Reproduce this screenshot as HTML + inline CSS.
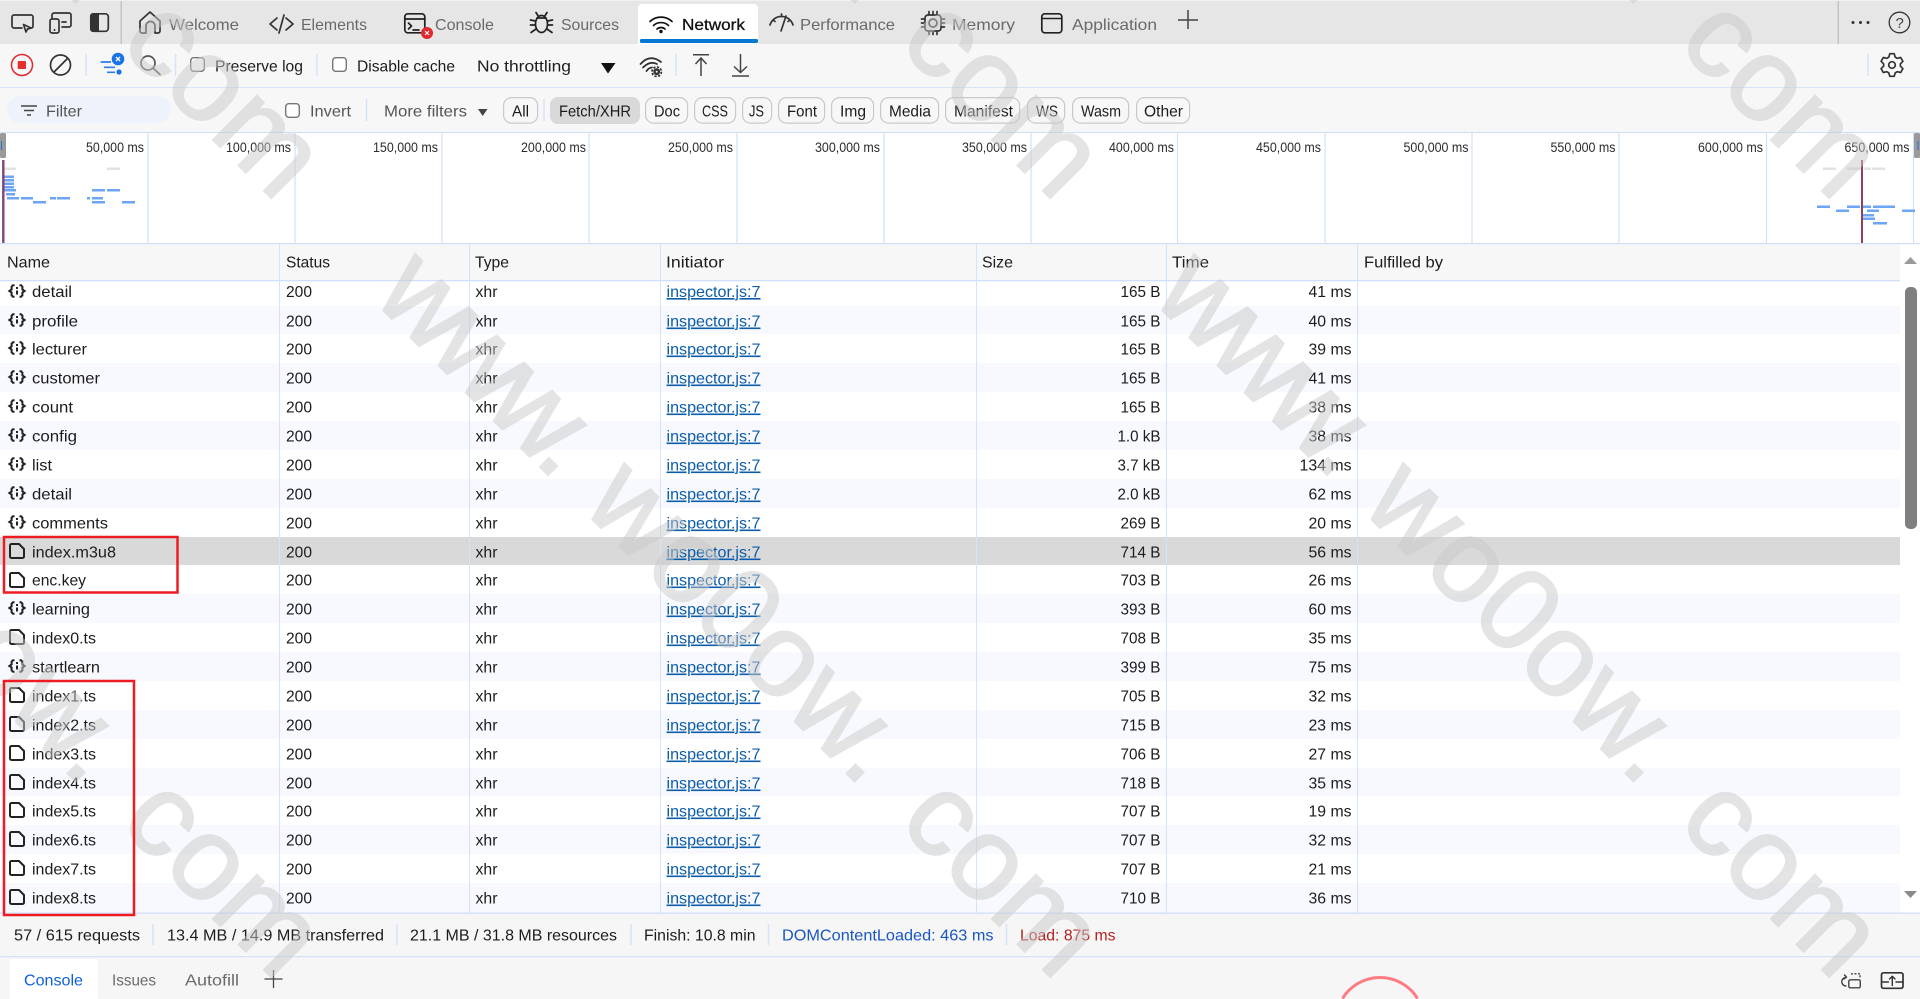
<!DOCTYPE html>
<html lang="en">
<head>
<meta charset="utf-8">
<title>DevTools Network</title>
<style>
html,body{margin:0;padding:0;background:#fff;width:1920px;height:999px;overflow:hidden}
svg{display:block}
text{font-family:"Liberation Sans",Arial,sans-serif;font-size:16px;fill:#1c1c1c;white-space:pre}
.g{fill:#6a6a6a}
.l{fill:#0b5cab;text-decoration:underline}
.o{font-size:13.6px;fill:#2c2c2c}
.wm{font-size:118px;fill:#c8c8c8;stroke:#c8c8c8;stroke-width:2px;letter-spacing:1px}
.i{fill:none;stroke:#333;stroke-width:1.7;stroke-linecap:round;stroke-linejoin:round}
.k{fill:#fff;stroke:#767676;stroke-width:1.4}
.s{stroke:#d6e4fa;stroke-width:1.5}
.b{fill:#6ea6f7}
.y{fill:#e2e2e2}
.ch{fill:#f7f7f7;stroke:#c9c9c9;stroke-width:1.2}
</style>
</head>
<body>
<svg width="1920" height="999" viewBox="0 0 1920 999" xmlns="http://www.w3.org/2000/svg">
<defs>
<symbol id="fe" viewBox="0 0 18 14" overflow="visible"><path d="M6.5 1.200H5L3.600 2.700V5.500L1.400 7L3.600 8.500V11.300L5 12.800H6.500M11.500 1.200H13L14.400 2.700V5.500L16.600 7L14.400 8.500V11.300L13 12.800H11.500" fill="none" stroke="#222" stroke-width="2"/><rect x="8" y="3" width="2" height="2" fill="#222"/><rect x="8" y="6.500" width="2" height="4" fill="#222"/></symbol>
<symbol id="fi" viewBox="0 0 16 16" overflow="visible"><path d="M1 2.500A1.500 1.500 0 0 1 2.500 1H10L15 6V13.500A1.500 1.500 0 0 1 13.500 15H2.500A1.500 1.500 0 0 1 1 13.500Z" fill="none" stroke="#222" stroke-width="2" stroke-linejoin="round"/></symbol>
</defs>

<!-- tab bar -->
<rect width="1920" height="44" fill="#e6e6e6"/>
<rect width="1920" height="1" fill="#f0f0f0"/>
<path class="i" d="M22 28H14a2 2 0 0 1-2-2V17a2 2 0 0 1 2-2H31a2 2 0 0 1 2 2V26a2 2 0 0 1-1.500 2"/>
<path class="i" d="M23.500 24.500L31 28L27.500 29L26 32Z"/>
<rect class="i" x="50" y="19" width="9" height="14" rx="2"/>
<circle cx="54.500" cy="30" r="1" fill="#333"/>
<path class="i" d="M52 18V15a2 2 0 0 1 2-2H69a2 2 0 0 1 2 2V25a2 2 0 0 1-2 2H62M62 22H66"/>
<path d="M93 13H99V32H93a3 3 0 0 1-3-3V16a3 3 0 0 1 3-3Z" fill="#333"/>
<rect class="i" x="90.800" y="13.800" width="17.500" height="17.500" rx="3"/>
<rect x="120.500" y="1" width="1.500" height="43" fill="#c4c4c4"/>
<path class="i" d="M140 21L150 12L160 21V31a2 2 0 0 1-2 2H155V26a4.500 4.500 0 0 0-9 0V33H142a2 2 0 0 1-2-2Z"/>
<text class="g" x="169" y="30" textLength="70" lengthAdjust="spacingAndGlyphs">Welcome</text>
<path class="i" d="M277 18L270 24L277 30M286 18L293 24L286 30M284 15L279 33"/>
<text class="g" x="301" y="30" textLength="66" lengthAdjust="spacingAndGlyphs">Elements</text>
<rect class="i" x="404.800" y="13.800" width="20" height="19" rx="3" style="stroke:#222"/>
<path class="i" d="M405 19H425M408.500 23L411.500 26L408.500 29M413 30H419" style="stroke:#222"/>
<circle cx="427" cy="33" r="6" fill="#e0282e"/>
<path d="M425 31L429 35M429 31L425 35" stroke="#fff" stroke-width="1.100"/>
<text class="g" x="435" y="30" textLength="59" lengthAdjust="spacingAndGlyphs">Console</text>
<ellipse class="i" cx="541.500" cy="24" rx="6" ry="8.500" style="stroke:#222"/>
<path class="i" d="M536 12.500L538.500 16.500M547 12.500L544.500 16.500M537 18H546M530.500 20L535.500 21M552.500 20L547.500 21M530.500 25H535M552.500 25H548M531 32.500L536 29M552 32.500L547 29" style="stroke:#222"/>
<text class="g" x="561" y="30" textLength="58" lengthAdjust="spacingAndGlyphs">Sources</text>
<path d="M638 44V8a4 4 0 0 1 4-4H754a4 4 0 0 1 4 4V44Z" fill="#fff"/>
<rect x="640" y="39" width="118" height="4" rx="1.500" fill="#0078d4"/>
<g fill="none" stroke="#111" stroke-width="1.700" stroke-linecap="round"><path d="M650 21.500a16 16 0 0 1 22 0M653.500 25.500a11 11 0 0 1 15 0M657 29a6 6 0 0 1 8 0"/></g>
<circle cx="661" cy="31.500" r="1.700" fill="#111"/>
<text x="682" y="30" textLength="63" lengthAdjust="spacingAndGlyphs" style="fill:#111;stroke:#111;stroke-width:.3px">Network</text>
<path class="i" d="M770 25A12 12 0 0 1 793 25M773 20L775 21.500M781.500 14V16.500M790 20L788 21.500M786 16L781 31"/>
<text class="g" x="800" y="30" textLength="95" lengthAdjust="spacingAndGlyphs">Performance</text>
<rect class="i" x="925" y="15" width="16" height="16" rx="3"/>
<circle class="i" cx="933" cy="23" r="4"/>
<path class="i" d="M929 11.500V14M933 11.500V14M937 11.500V14M929 32V34.500M933 32V34.500M937 32V34.500M921.500 19H924M921.500 23H924M921.500 27H924M942 19H944.500M942 23H944.500M942 27H944.500"/>
<text class="g" x="952" y="30" textLength="63" lengthAdjust="spacingAndGlyphs">Memory</text>
<rect x="1041.800" y="13.800" width="20" height="19" rx="3" fill="none" stroke="#222" stroke-width="1.700"/>
<path d="M1042 18.500H1062" stroke="#222" stroke-width="1.500"/>
<text class="g" x="1072" y="30" textLength="85" lengthAdjust="spacingAndGlyphs">Application</text>
<path d="M1188 10V29M1178 20H1198" stroke="#444" stroke-width="1.500"/>
<rect x="1837.500" y="1" width="1.500" height="43" fill="#c4c4c4"/>
<circle cx="1853" cy="22.500" r="1.500" fill="#333"/><circle cx="1860.500" cy="22.500" r="1.500" fill="#333"/><circle cx="1868" cy="22.500" r="1.500" fill="#333"/>
<circle class="i" cx="1899.500" cy="22.500" r="10.300" style="stroke-width:1.300"/>
<text x="1895.500" y="28" style="font-size:15px;fill:#444">?</text>

<!-- toolbar -->
<rect y="44" width="1920" height="44" fill="#f7f7f7"/>
<rect y="87" width="1920" height="1" fill="#d6e4fa"/>
<circle cx="22" cy="65" r="10.500" fill="none" stroke="#e5252b" stroke-width="1.500"/>
<rect x="17.700" y="61" width="8.300" height="8" fill="#e5302f" rx=".8"/>
<circle class="i" cx="60.500" cy="65" r="10"/>
<path class="i" d="M54.500 71.500L67.500 58.500"/>
<path class="s" d="M86 54V76M175.500 54V76M317 54V76M676 54V76M1868 54V76"/>
<path d="M100.600 62H111M104 67.300H115M107 72.300H115" stroke="#2b7de9" stroke-width="1.700"/>
<circle cx="119" cy="72" r="2.600" fill="#1a73e8"/>
<circle cx="118" cy="59" r="6.300" fill="#1a73e8"/>
<path d="M116 57L120 61M120 57L116 61" stroke="#fff" stroke-width="1.300"/>
<circle class="i" cx="148" cy="63" r="7" style="stroke:#555"/>
<path class="i" d="M153.500 68.500L160 74.500" style="stroke:#555"/>
<rect class="k" x="190.700" y="57.700" width="13.600" height="13.600" rx="3"/>
<text x="215" y="71.500" textLength="88" lengthAdjust="spacingAndGlyphs">Preserve log</text>
<rect class="k" x="332.700" y="57.700" width="13.600" height="13.600" rx="3"/>
<text x="357" y="71.500" textLength="98" lengthAdjust="spacingAndGlyphs">Disable cache</text>
<text x="477" y="71.500" textLength="94" lengthAdjust="spacingAndGlyphs">No throttling</text>
<polygon points="601,63 615.500,63 608,73.500" fill="#111"/>
<path d="M640.500 64Q650 53.500 661 62M643 67.500Q650 60.500 657 64M646.500 71Q649 67.500 652 67.500" fill="none" stroke="#333" stroke-width="1.800" stroke-linecap="round"/>
<circle cx="656.700" cy="71.700" r="3.400" fill="#333"/>
<circle cx="656.700" cy="71.700" r="4.700" fill="none" stroke="#333" stroke-width="1.800" stroke-dasharray="2.200 1.500"/>
<circle cx="656.700" cy="71.700" r="1" fill="#f7f7f7"/>
<path d="M693 54.800H709M701 76V58M695.500 64L701 58L706.500 64M740.500 54V72.500M734 66.500L740.500 72.500L747 66.500M732 76H749" fill="none" stroke="#444" stroke-width="1.500"/>
<g transform="translate(1892,65)"><path class="i" d="M-3.200-7.900L-2.200-11.300L2.200-11.300L3.200-7.900L5.200-6.700L8.700-7.500L10.900-3.700L8.400-1.200L8.400 1.200L10.900 3.700L8.700 7.500L5.200 6.700L3.200 7.900L2.200 11.300L-2.200 11.300L-3.200 7.900L-5.200 6.700L-8.700 7.500L-10.900 3.700L-8.400 1.200L-8.400-1.200L-10.900-3.700L-8.700-7.500L-5.200-6.700Z"/><circle class="i" r="3.300"/></g>

<!-- filter row -->
<rect y="88" width="1920" height="44" fill="#f7f7f7"/>
<rect x="7" y="96" width="164" height="27" rx="13.500" fill="#edf2fb"/>
<path d="M21 106H37M24 110.500H34M27 115H31" stroke="#444" stroke-width="1.500"/>
<text x="46" y="116.500" textLength="36" lengthAdjust="spacingAndGlyphs" style="fill:#555">Filter</text>
<rect class="k" x="285.700" y="103.700" width="13.600" height="13.600" rx="3"/>
<text x="310" y="116.500" textLength="41" lengthAdjust="spacingAndGlyphs" style="fill:#555">Invert</text>
<path class="s" d="M366.500 99V121M544 99V121"/>
<text x="384" y="116.500" textLength="83" lengthAdjust="spacingAndGlyphs" style="fill:#555">More filters</text>
<polygon points="478,109 487.500,109 482.700,116" fill="#444"/>
<rect class="ch" x="503.600" y="97.600" width="34" height="25.500" rx="8"/>
<text x="512" y="116.500" textLength="17" lengthAdjust="spacingAndGlyphs">All</text>
<rect x="550" y="97" width="90" height="27" rx="8" fill="#d9d9d9"/>
<text x="559" y="116.500" textLength="72" lengthAdjust="spacingAndGlyphs">Fetch/XHR</text>
<rect class="ch" x="645.600" y="97.600" width="42" height="25.500" rx="8"/><text x="654" y="116.500" textLength="26" lengthAdjust="spacingAndGlyphs">Doc</text>
<rect class="ch" x="694.600" y="97.600" width="41" height="25.500" rx="8"/><text x="702" y="116.500" textLength="26" lengthAdjust="spacingAndGlyphs">CSS</text>
<rect class="ch" x="742.600" y="97.600" width="29" height="25.500" rx="8"/><text x="749" y="116.500" textLength="15" lengthAdjust="spacingAndGlyphs">JS</text>
<rect class="ch" x="778.600" y="97.600" width="46" height="25.500" rx="8"/><text x="787" y="116.500" textLength="30" lengthAdjust="spacingAndGlyphs">Font</text>
<rect class="ch" x="831.600" y="97.600" width="42" height="25.500" rx="8"/><text x="840" y="116.500" textLength="26" lengthAdjust="spacingAndGlyphs">Img</text>
<rect class="ch" x="880.600" y="97.600" width="58" height="25.500" rx="8"/><text x="889" y="116.500" textLength="42" lengthAdjust="spacingAndGlyphs">Media</text>
<rect class="ch" x="945.600" y="97.600" width="74" height="25.500" rx="8"/><text x="954" y="116.500" textLength="59" lengthAdjust="spacingAndGlyphs">Manifest</text>
<rect class="ch" x="1027.600" y="97.600" width="37" height="25.500" rx="8"/><text x="1036" y="116.500" textLength="22" lengthAdjust="spacingAndGlyphs">WS</text>
<rect class="ch" x="1072.600" y="97.600" width="56" height="25.500" rx="8"/><text x="1081" y="116.500" textLength="40" lengthAdjust="spacingAndGlyphs">Wasm</text>
<rect class="ch" x="1136.600" y="97.600" width="53" height="25.500" rx="8"/><text x="1144" y="116.500" textLength="39" lengthAdjust="spacingAndGlyphs">Other</text>
<rect y="132" width="1920" height="1.300" fill="#d0e0fb"/>

<!-- overview -->
<rect y="133" width="1920" height="110" fill="#fff"/>
<path d="M148 133V243M295 133V243M442 133V243M589 133V243M737 133V243M884 133V243M1031 133V243M1177.500 133V243M1325 133V243M1472 133V243M1619 133V243M1766.500 133V243M1913.500 133V243" stroke="#cfe0fb" stroke-width="1.200"/>
<g text-anchor="end">
<text class="o" x="144" y="152" textLength="58" lengthAdjust="spacingAndGlyphs">50,000 ms</text>
<text class="o" x="291" y="152" textLength="65" lengthAdjust="spacingAndGlyphs">100,000 ms</text>
<text class="o" x="438" y="152" textLength="65" lengthAdjust="spacingAndGlyphs">150,000 ms</text>
<text class="o" x="586" y="152" textLength="65" lengthAdjust="spacingAndGlyphs">200,000 ms</text>
<text class="o" x="733" y="152" textLength="65" lengthAdjust="spacingAndGlyphs">250,000 ms</text>
<text class="o" x="880" y="152" textLength="65" lengthAdjust="spacingAndGlyphs">300,000 ms</text>
<text class="o" x="1027" y="152" textLength="65" lengthAdjust="spacingAndGlyphs">350,000 ms</text>
<text class="o" x="1174" y="152" textLength="65" lengthAdjust="spacingAndGlyphs">400,000 ms</text>
<text class="o" x="1321" y="152" textLength="65" lengthAdjust="spacingAndGlyphs">450,000 ms</text>
<text class="o" x="1468.500" y="152" textLength="65" lengthAdjust="spacingAndGlyphs">500,000 ms</text>
<text class="o" x="1615.500" y="152" textLength="65" lengthAdjust="spacingAndGlyphs">550,000 ms</text>
<text class="o" x="1763" y="152" textLength="65" lengthAdjust="spacingAndGlyphs">600,000 ms</text>
<text class="o" x="1909.500" y="152" textLength="65" lengthAdjust="spacingAndGlyphs">650,000 ms</text>
</g>
<rect class="y" x="3" y="167.500" width="13" height="2.500"/><rect class="y" x="107" y="167.500" width="13" height="2.500"/>
<rect class="b" x="3" y="175.500" width="11" height="2.500"/><rect class="b" x="3" y="179" width="11" height="2.500"/><rect class="b" x="3" y="182.500" width="11" height="2.500"/><rect class="b" x="3" y="186" width="11" height="2.500"/>
<rect class="b" x="3" y="189" width="13" height="2.500"/><rect class="b" x="92" y="189" width="13" height="2.500"/><rect class="b" x="107" y="189" width="13" height="2.500"/>
<rect class="b" x="6" y="193" width="9" height="2.500"/>
<rect class="b" x="7" y="197" width="12" height="2.500"/><rect class="b" x="21" y="197" width="12" height="2.500"/><rect class="b" x="50" y="197" width="6" height="2.500"/><rect class="b" x="57" y="197" width="13" height="2.500"/><rect class="b" x="87" y="197" width="3" height="2.500"/><rect class="b" x="92" y="197" width="11" height="2.500"/>
<rect class="b" x="33" y="201" width="13" height="2.500"/><rect class="b" x="92" y="201" width="13" height="2.500"/><rect class="b" x="122" y="201" width="13" height="2.500"/>
<rect x="2" y="160" width="1" height="83" fill="#4a6fd0"/><rect x="3" y="160" width="1.500" height="83" fill="#b0353f"/>
<rect x="0" y="133" width="6" height="25" rx="1.500" fill="#9a9a9a"/><rect x="1" y="141" width="1" height="9" fill="#2b6fd6"/>
<rect class="y" x="1823" y="167.500" width="13" height="2.500"/><rect class="y" x="1847" y="167.500" width="14" height="2.500"/><rect class="y" x="1864" y="167.500" width="7" height="2.500"/><rect class="y" x="1872" y="167.500" width="13" height="2.500"/>
<rect class="b" x="1817" y="205.500" width="13" height="2.500"/><rect class="b" x="1847" y="205.500" width="13" height="2.500"/><rect class="b" x="1862" y="205.500" width="9" height="2.500"/><rect class="b" x="1873" y="205.500" width="9" height="2.500"/><rect class="b" x="1882" y="205.500" width="13" height="2.500"/>
<rect class="b" x="1836" y="209.500" width="13" height="2.500"/><rect class="b" x="1867" y="209.500" width="12" height="2.500"/><rect class="b" x="1902" y="209.500" width="13" height="2.500"/>
<rect class="b" x="1863" y="214" width="11" height="2.500"/><rect class="b" x="1863" y="217.500" width="12" height="2.500"/><rect class="b" x="1873" y="222" width="14" height="2.500"/>
<rect x="1861" y="160" width="2" height="83" fill="#93405a"/>
<rect x="1914" y="133" width="6" height="25" rx="1.500" fill="#9a9a9a"/><rect x="1917.500" y="141" width="1" height="9" fill="#2b6fd6"/>

<!-- table header -->
<rect y="243" width="1900" height="38" fill="#f7f7f7"/>
<rect y="243" width="1920" height="1.200" fill="#d0e0fb"/>
<rect y="280" width="1900" height="1.300" fill="#d0e0fb"/>
<text x="7" y="267.500" textLength="43" lengthAdjust="spacingAndGlyphs">Name</text>
<text x="286" y="267.500" textLength="44" lengthAdjust="spacingAndGlyphs">Status</text>
<text x="475" y="267.500" textLength="34" lengthAdjust="spacingAndGlyphs">Type</text>
<text x="666" y="267.500" textLength="58" lengthAdjust="spacingAndGlyphs">Initiator</text>
<text x="982" y="267.500" textLength="31" lengthAdjust="spacingAndGlyphs">Size</text>
<text x="1172" y="267.500" textLength="37" lengthAdjust="spacingAndGlyphs">Time</text>
<text x="1364" y="267.500" textLength="79" lengthAdjust="spacingAndGlyphs">Fulfilled by</text>

<!-- stripes -->
<g fill="#f8f9fe">
<rect y="306" width="1900" height="28"/><rect y="363" width="1900" height="29"/><rect y="421" width="1900" height="29"/><rect y="479" width="1900" height="29"/>
<rect y="594" width="1900" height="29"/><rect y="652" width="1900" height="29"/><rect y="710" width="1900" height="29"/><rect y="768" width="1900" height="28"/><rect y="825" width="1900" height="29"/><rect y="883" width="1900" height="30"/>
</g>
<rect y="537" width="1900" height="28" fill="#d9d9d9"/>
<path d="M279.500 243V913M469.500 243V913M660.500 243V913M976.500 243V913M1166.500 243V913M1357.500 243V913" stroke="#d6e4fa" stroke-width="1.100"/>

<!-- icons -->
<use href="#fe" x="8" y="284" width="18" height="14"/>
<use href="#fe" x="8" y="313" width="18" height="14"/>
<use href="#fe" x="8" y="341" width="18" height="14"/>
<use href="#fe" x="8" y="370" width="18" height="14"/>
<use href="#fe" x="8" y="399" width="18" height="14"/>
<use href="#fe" x="8" y="428" width="18" height="14"/>
<use href="#fe" x="8" y="457" width="18" height="14"/>
<use href="#fe" x="8" y="486" width="18" height="14"/>
<use href="#fe" x="8" y="515" width="18" height="14"/>
<use href="#fi" x="9" y="543" width="16" height="16"/>
<use href="#fi" x="9" y="572" width="16" height="16"/>
<use href="#fe" x="8" y="601" width="18" height="14"/>
<use href="#fi" x="9" y="629" width="16" height="16"/>
<use href="#fe" x="8" y="659" width="18" height="14"/>
<use href="#fi" x="9" y="687" width="16" height="16"/>
<use href="#fi" x="9" y="716" width="16" height="16"/>
<use href="#fi" x="9" y="745" width="16" height="16"/>
<use href="#fi" x="9" y="774" width="16" height="16"/>
<use href="#fi" x="9" y="802" width="16" height="16"/>
<use href="#fi" x="9" y="831" width="16" height="16"/>
<use href="#fi" x="9" y="860" width="16" height="16"/>
<use href="#fi" x="9" y="889" width="16" height="16"/>

<!-- names -->
<text x="32" y="297" textLength="40" lengthAdjust="spacingAndGlyphs">detail</text>
<text x="32" y="326.500" textLength="46" lengthAdjust="spacingAndGlyphs">profile</text>
<text x="32" y="354.500" textLength="55" lengthAdjust="spacingAndGlyphs">lecturer</text>
<text x="32" y="383.500" textLength="68" lengthAdjust="spacingAndGlyphs">customer</text>
<text x="32" y="412.500" textLength="41" lengthAdjust="spacingAndGlyphs">count</text>
<text x="32" y="441.500" textLength="45" lengthAdjust="spacingAndGlyphs">config</text>
<text x="32" y="470.500" textLength="20" lengthAdjust="spacingAndGlyphs">list</text>
<text x="32" y="499.500" textLength="40" lengthAdjust="spacingAndGlyphs">detail</text>
<text x="32" y="528.500" textLength="76" lengthAdjust="spacingAndGlyphs">comments</text>
<text x="32" y="557.500" textLength="84" lengthAdjust="spacingAndGlyphs">index.m3u8</text>
<text x="32" y="585.500" textLength="54" lengthAdjust="spacingAndGlyphs">enc.key</text>
<text x="32" y="614.500" textLength="58" lengthAdjust="spacingAndGlyphs">learning</text>
<text x="32" y="643.500" textLength="64" lengthAdjust="spacingAndGlyphs">index0.ts</text>
<text x="32" y="672.500" textLength="68" lengthAdjust="spacingAndGlyphs">startlearn</text>
<text x="32" y="701.500" textLength="64" lengthAdjust="spacingAndGlyphs">index1.ts</text>
<text x="32" y="730.500" textLength="64" lengthAdjust="spacingAndGlyphs">index2.ts</text>
<text x="32" y="759.500" textLength="64" lengthAdjust="spacingAndGlyphs">index3.ts</text>
<text x="32" y="788.500" textLength="64" lengthAdjust="spacingAndGlyphs">index4.ts</text>
<text x="32" y="816.500" textLength="64" lengthAdjust="spacingAndGlyphs">index5.ts</text>
<text x="32" y="845.500" textLength="64" lengthAdjust="spacingAndGlyphs">index6.ts</text>
<text x="32" y="874.500" textLength="64" lengthAdjust="spacingAndGlyphs">index7.ts</text>
<text x="32" y="903.500" textLength="64" lengthAdjust="spacingAndGlyphs">index8.ts</text>

<!-- status -->
<text x="286" y="297" textLength="26" lengthAdjust="spacingAndGlyphs">200</text>
<text x="286" y="326.500" textLength="26" lengthAdjust="spacingAndGlyphs">200</text>
<text x="286" y="354.500" textLength="26" lengthAdjust="spacingAndGlyphs">200</text>
<text x="286" y="383.500" textLength="26" lengthAdjust="spacingAndGlyphs">200</text>
<text x="286" y="412.500" textLength="26" lengthAdjust="spacingAndGlyphs">200</text>
<text x="286" y="441.500" textLength="26" lengthAdjust="spacingAndGlyphs">200</text>
<text x="286" y="470.500" textLength="26" lengthAdjust="spacingAndGlyphs">200</text>
<text x="286" y="499.500" textLength="26" lengthAdjust="spacingAndGlyphs">200</text>
<text x="286" y="528.500" textLength="26" lengthAdjust="spacingAndGlyphs">200</text>
<text x="286" y="557.500" textLength="26" lengthAdjust="spacingAndGlyphs">200</text>
<text x="286" y="585.500" textLength="26" lengthAdjust="spacingAndGlyphs">200</text>
<text x="286" y="614.500" textLength="26" lengthAdjust="spacingAndGlyphs">200</text>
<text x="286" y="643.500" textLength="26" lengthAdjust="spacingAndGlyphs">200</text>
<text x="286" y="672.500" textLength="26" lengthAdjust="spacingAndGlyphs">200</text>
<text x="286" y="701.500" textLength="26" lengthAdjust="spacingAndGlyphs">200</text>
<text x="286" y="730.500" textLength="26" lengthAdjust="spacingAndGlyphs">200</text>
<text x="286" y="759.500" textLength="26" lengthAdjust="spacingAndGlyphs">200</text>
<text x="286" y="788.500" textLength="26" lengthAdjust="spacingAndGlyphs">200</text>
<text x="286" y="816.500" textLength="26" lengthAdjust="spacingAndGlyphs">200</text>
<text x="286" y="845.500" textLength="26" lengthAdjust="spacingAndGlyphs">200</text>
<text x="286" y="874.500" textLength="26" lengthAdjust="spacingAndGlyphs">200</text>
<text x="286" y="903.500" textLength="26" lengthAdjust="spacingAndGlyphs">200</text>

<!-- type -->
<text x="475.500" y="297" textLength="22" lengthAdjust="spacingAndGlyphs">xhr</text>
<text x="475.500" y="326.500" textLength="22" lengthAdjust="spacingAndGlyphs">xhr</text>
<text x="475.500" y="354.500" textLength="22" lengthAdjust="spacingAndGlyphs">xhr</text>
<text x="475.500" y="383.500" textLength="22" lengthAdjust="spacingAndGlyphs">xhr</text>
<text x="475.500" y="412.500" textLength="22" lengthAdjust="spacingAndGlyphs">xhr</text>
<text x="475.500" y="441.500" textLength="22" lengthAdjust="spacingAndGlyphs">xhr</text>
<text x="475.500" y="470.500" textLength="22" lengthAdjust="spacingAndGlyphs">xhr</text>
<text x="475.500" y="499.500" textLength="22" lengthAdjust="spacingAndGlyphs">xhr</text>
<text x="475.500" y="528.500" textLength="22" lengthAdjust="spacingAndGlyphs">xhr</text>
<text x="475.500" y="557.500" textLength="22" lengthAdjust="spacingAndGlyphs">xhr</text>
<text x="475.500" y="585.500" textLength="22" lengthAdjust="spacingAndGlyphs">xhr</text>
<text x="475.500" y="614.500" textLength="22" lengthAdjust="spacingAndGlyphs">xhr</text>
<text x="475.500" y="643.500" textLength="22" lengthAdjust="spacingAndGlyphs">xhr</text>
<text x="475.500" y="672.500" textLength="22" lengthAdjust="spacingAndGlyphs">xhr</text>
<text x="475.500" y="701.500" textLength="22" lengthAdjust="spacingAndGlyphs">xhr</text>
<text x="475.500" y="730.500" textLength="22" lengthAdjust="spacingAndGlyphs">xhr</text>
<text x="475.500" y="759.500" textLength="22" lengthAdjust="spacingAndGlyphs">xhr</text>
<text x="475.500" y="788.500" textLength="22" lengthAdjust="spacingAndGlyphs">xhr</text>
<text x="475.500" y="816.500" textLength="22" lengthAdjust="spacingAndGlyphs">xhr</text>
<text x="475.500" y="845.500" textLength="22" lengthAdjust="spacingAndGlyphs">xhr</text>
<text x="475.500" y="874.500" textLength="22" lengthAdjust="spacingAndGlyphs">xhr</text>
<text x="475.500" y="903.500" textLength="22" lengthAdjust="spacingAndGlyphs">xhr</text>

<!-- initiator -->
<text class="l" x="666.500" y="297" textLength="94" lengthAdjust="spacingAndGlyphs">inspector.js:7</text>
<text class="l" x="666.500" y="326.500" textLength="94" lengthAdjust="spacingAndGlyphs">inspector.js:7</text>
<text class="l" x="666.500" y="354.500" textLength="94" lengthAdjust="spacingAndGlyphs">inspector.js:7</text>
<text class="l" x="666.500" y="383.500" textLength="94" lengthAdjust="spacingAndGlyphs">inspector.js:7</text>
<text class="l" x="666.500" y="412.500" textLength="94" lengthAdjust="spacingAndGlyphs">inspector.js:7</text>
<text class="l" x="666.500" y="441.500" textLength="94" lengthAdjust="spacingAndGlyphs">inspector.js:7</text>
<text class="l" x="666.500" y="470.500" textLength="94" lengthAdjust="spacingAndGlyphs">inspector.js:7</text>
<text class="l" x="666.500" y="499.500" textLength="94" lengthAdjust="spacingAndGlyphs">inspector.js:7</text>
<text class="l" x="666.500" y="528.500" textLength="94" lengthAdjust="spacingAndGlyphs">inspector.js:7</text>
<text class="l" x="666.500" y="557.500" textLength="94" lengthAdjust="spacingAndGlyphs">inspector.js:7</text>
<text class="l" x="666.500" y="585.500" textLength="94" lengthAdjust="spacingAndGlyphs">inspector.js:7</text>
<text class="l" x="666.500" y="614.500" textLength="94" lengthAdjust="spacingAndGlyphs">inspector.js:7</text>
<text class="l" x="666.500" y="643.500" textLength="94" lengthAdjust="spacingAndGlyphs">inspector.js:7</text>
<text class="l" x="666.500" y="672.500" textLength="94" lengthAdjust="spacingAndGlyphs">inspector.js:7</text>
<text class="l" x="666.500" y="701.500" textLength="94" lengthAdjust="spacingAndGlyphs">inspector.js:7</text>
<text class="l" x="666.500" y="730.500" textLength="94" lengthAdjust="spacingAndGlyphs">inspector.js:7</text>
<text class="l" x="666.500" y="759.500" textLength="94" lengthAdjust="spacingAndGlyphs">inspector.js:7</text>
<text class="l" x="666.500" y="788.500" textLength="94" lengthAdjust="spacingAndGlyphs">inspector.js:7</text>
<text class="l" x="666.500" y="816.500" textLength="94" lengthAdjust="spacingAndGlyphs">inspector.js:7</text>
<text class="l" x="666.500" y="845.500" textLength="94" lengthAdjust="spacingAndGlyphs">inspector.js:7</text>
<text class="l" x="666.500" y="874.500" textLength="94" lengthAdjust="spacingAndGlyphs">inspector.js:7</text>
<text class="l" x="666.500" y="903.500" textLength="94" lengthAdjust="spacingAndGlyphs">inspector.js:7</text>

<!-- size -->
<g text-anchor="end">
<text x="1160.500" y="297" textLength="40" lengthAdjust="spacingAndGlyphs">165 B</text>
<text x="1160.500" y="326.500" textLength="40" lengthAdjust="spacingAndGlyphs">165 B</text>
<text x="1160.500" y="354.500" textLength="40" lengthAdjust="spacingAndGlyphs">165 B</text>
<text x="1160.500" y="383.500" textLength="40" lengthAdjust="spacingAndGlyphs">165 B</text>
<text x="1160.500" y="412.500" textLength="40" lengthAdjust="spacingAndGlyphs">165 B</text>
<text x="1160.500" y="441.500" textLength="43" lengthAdjust="spacingAndGlyphs">1.0 kB</text>
<text x="1160.500" y="470.500" textLength="43" lengthAdjust="spacingAndGlyphs">3.7 kB</text>
<text x="1160.500" y="499.500" textLength="43" lengthAdjust="spacingAndGlyphs">2.0 kB</text>
<text x="1160.500" y="528.500" textLength="40" lengthAdjust="spacingAndGlyphs">269 B</text>
<text x="1160.500" y="557.500" textLength="40" lengthAdjust="spacingAndGlyphs">714 B</text>
<text x="1160.500" y="585.500" textLength="40" lengthAdjust="spacingAndGlyphs">703 B</text>
<text x="1160.500" y="614.500" textLength="40" lengthAdjust="spacingAndGlyphs">393 B</text>
<text x="1160.500" y="643.500" textLength="40" lengthAdjust="spacingAndGlyphs">708 B</text>
<text x="1160.500" y="672.500" textLength="40" lengthAdjust="spacingAndGlyphs">399 B</text>
<text x="1160.500" y="701.500" textLength="40" lengthAdjust="spacingAndGlyphs">705 B</text>
<text x="1160.500" y="730.500" textLength="40" lengthAdjust="spacingAndGlyphs">715 B</text>
<text x="1160.500" y="759.500" textLength="40" lengthAdjust="spacingAndGlyphs">706 B</text>
<text x="1160.500" y="788.500" textLength="40" lengthAdjust="spacingAndGlyphs">718 B</text>
<text x="1160.500" y="816.500" textLength="40" lengthAdjust="spacingAndGlyphs">707 B</text>
<text x="1160.500" y="845.500" textLength="40" lengthAdjust="spacingAndGlyphs">707 B</text>
<text x="1160.500" y="874.500" textLength="40" lengthAdjust="spacingAndGlyphs">707 B</text>
<text x="1160.500" y="903.500" textLength="40" lengthAdjust="spacingAndGlyphs">710 B</text>
<!-- time -->
<text x="1351.500" y="297" textLength="43" lengthAdjust="spacingAndGlyphs">41 ms</text>
<text x="1351.500" y="326.500" textLength="43" lengthAdjust="spacingAndGlyphs">40 ms</text>
<text x="1351.500" y="354.500" textLength="43" lengthAdjust="spacingAndGlyphs">39 ms</text>
<text x="1351.500" y="383.500" textLength="43" lengthAdjust="spacingAndGlyphs">41 ms</text>
<text x="1351.500" y="412.500" textLength="43" lengthAdjust="spacingAndGlyphs">38 ms</text>
<text x="1351.500" y="441.500" textLength="43" lengthAdjust="spacingAndGlyphs">38 ms</text>
<text x="1351.500" y="470.500" textLength="52" lengthAdjust="spacingAndGlyphs">134 ms</text>
<text x="1351.500" y="499.500" textLength="43" lengthAdjust="spacingAndGlyphs">62 ms</text>
<text x="1351.500" y="528.500" textLength="43" lengthAdjust="spacingAndGlyphs">20 ms</text>
<text x="1351.500" y="557.500" textLength="43" lengthAdjust="spacingAndGlyphs">56 ms</text>
<text x="1351.500" y="585.500" textLength="43" lengthAdjust="spacingAndGlyphs">26 ms</text>
<text x="1351.500" y="614.500" textLength="43" lengthAdjust="spacingAndGlyphs">60 ms</text>
<text x="1351.500" y="643.500" textLength="43" lengthAdjust="spacingAndGlyphs">35 ms</text>
<text x="1351.500" y="672.500" textLength="43" lengthAdjust="spacingAndGlyphs">75 ms</text>
<text x="1351.500" y="701.500" textLength="43" lengthAdjust="spacingAndGlyphs">32 ms</text>
<text x="1351.500" y="730.500" textLength="43" lengthAdjust="spacingAndGlyphs">23 ms</text>
<text x="1351.500" y="759.500" textLength="43" lengthAdjust="spacingAndGlyphs">27 ms</text>
<text x="1351.500" y="788.500" textLength="43" lengthAdjust="spacingAndGlyphs">35 ms</text>
<text x="1351.500" y="816.500" textLength="43" lengthAdjust="spacingAndGlyphs">19 ms</text>
<text x="1351.500" y="845.500" textLength="43" lengthAdjust="spacingAndGlyphs">32 ms</text>
<text x="1351.500" y="874.500" textLength="43" lengthAdjust="spacingAndGlyphs">21 ms</text>
<text x="1351.500" y="903.500" textLength="43" lengthAdjust="spacingAndGlyphs">36 ms</text>
</g>

<!-- scrollbar -->
<polygon points="1910.500,257 1917,264 1904,264" fill="#9a9a9a"/>
<rect x="1905" y="287" width="12" height="242" rx="5" fill="#7f7f7f"/>
<polygon points="1904,891 1917,891 1910.500,898" fill="#8a8a8a"/>

<!-- status bar -->
<rect y="913" width="1920" height="86" fill="#f6f6f6"/>
<rect y="912.500" width="1920" height="1.300" fill="#d0e0fb"/>
<rect y="956" width="1920" height="1.300" fill="#d6e4fa"/>
<path class="s" d="M153 924V945M397 924V945M631 924V945M768.500 924V945M1006.500 924V945"/>
<text x="14" y="940.500" textLength="126" lengthAdjust="spacingAndGlyphs">57 / 615 requests</text>
<text x="167" y="940.500" textLength="217" lengthAdjust="spacingAndGlyphs">13.4 MB / 14.9 MB transferred</text>
<text x="410" y="940.500" textLength="207" lengthAdjust="spacingAndGlyphs">21.1 MB / 31.8 MB resources</text>
<text x="644" y="940.500" textLength="111.500" lengthAdjust="spacingAndGlyphs">Finish: 10.8 min</text>
<text x="782" y="940.500" textLength="211.500" lengthAdjust="spacingAndGlyphs" style="fill:#1a56c4">DOMContentLoaded: 463 ms</text>
<text x="1020" y="940.500" textLength="95.500" lengthAdjust="spacingAndGlyphs" style="fill:#b3201f">Load: 875 ms</text>

<!-- bottom tabs -->
<rect x="10" y="959" width="88" height="40" rx="2" fill="#fff"/>
<text x="24" y="985.500" textLength="59" lengthAdjust="spacingAndGlyphs" style="fill:#0f62d6">Console</text>
<text class="g" x="112" y="985.500" textLength="44" lengthAdjust="spacingAndGlyphs">Issues</text>
<text class="g" x="185" y="985.500" textLength="54" lengthAdjust="spacingAndGlyphs">Autofill</text>
<path d="M273.500 970V988M264.500 979H282.500" stroke="#444" stroke-width="1.300"/>
<rect x="1848.800" y="979.800" width="11.500" height="8" rx="1.500" fill="none" stroke="#444" stroke-width="1.400"/>
<path d="M1851 973.800H1860V978" fill="none" stroke="#444" stroke-width="1.400" stroke-dasharray="2 1.500"/>
<path class="i" d="M1846 977.500A4 4 0 0 0 1846 986M1844 979L1846.500 977L1844.500 975" style="stroke-width:1.300"/>
<rect class="i" x="1881.500" y="972.800" width="21.500" height="15.500" rx="2"/>
<path class="i" d="M1882 982H1888.500M1896 982H1903M1892.300 985.500V976.500M1889.500 979L1892.300 976.300L1895 979" style="stroke-width:1.400"/>

<!-- watermark -->
<g opacity=".5">
<text class="wm" transform="translate(354.200,281.100) rotate(45)" dx="24 -8 -8 -8 0 0 0 0 0 0 0 0 14">www. wo0ow. com</text>
<text class="wm" transform="translate(1133.200,281.100) rotate(45)" dx="24 -8 -8 -8 0 0 0 0 0 0 0 0 14">www. wo0ow. com</text>
<text class="wm" transform="translate(-424.800,281.100) rotate(45)" dx="24 -8 -8 -8 0 0 0 0 0 0 0 0 14">www. wo0ow. com</text>
<text class="wm" transform="translate(354.200,-497.900) rotate(45)" dx="24 -8 -8 -8 0 0 0 0 0 0 0 0 14">www. wo0ow. com</text>
<text class="wm" transform="translate(1133.200,-497.900) rotate(45)" dx="24 -8 -8 -8 0 0 0 0 0 0 0 0 14">www. wo0ow. com</text>
<text class="wm" transform="translate(-424.800,-497.900) rotate(45)" dx="24 -8 -8 -8 0 0 0 0 0 0 0 0 14">www. wo0ow. com</text>
</g>

<!-- annotations -->
<rect x="4" y="537" width="173.500" height="55.500" fill="none" stroke="#ed1c24" stroke-width="2.500"/>
<rect x="4" y="681" width="130" height="234" fill="none" stroke="#ed1c24" stroke-width="2.500"/>
<path d="M1342.500 998.500A44 44 0 0 1 1417.500 998.500" fill="none" stroke="#ff7b82" stroke-width="3"/>
</svg>
</body>
</html>
